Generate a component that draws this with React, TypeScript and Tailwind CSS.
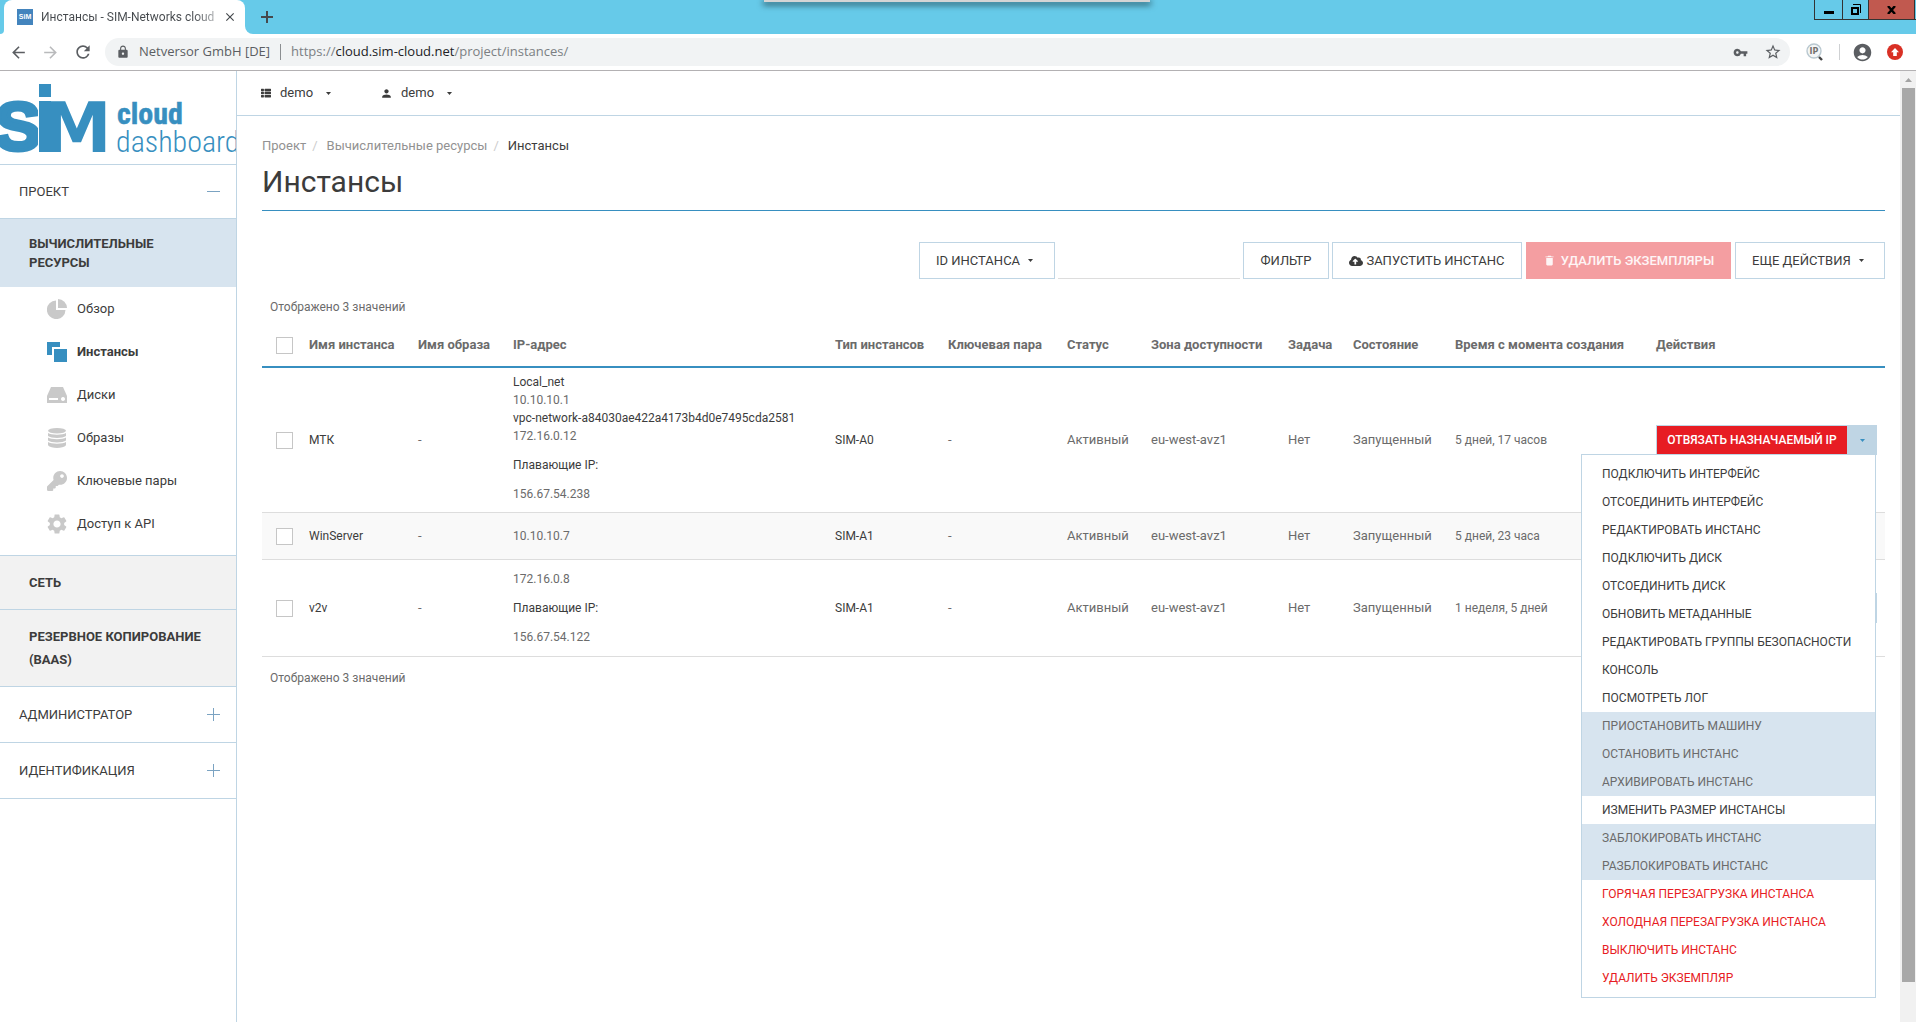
import { useState } from "react";
import type { ReactNode } from "react";
import { FaCloudUploadAlt, FaKey, FaThList } from "react-icons/fa";
import { IoMdTrash } from "react-icons/io";
import {
  MdAccountCircle,
  MdArrowBack,
  MdArrowForward,
  MdClose,
  MdLock,
  MdPerson,
  MdRefresh,
  MdSettings,
  MdStarBorder,
  MdVpnKey,
} from "react-icons/md";

type Instance = {
  name: string;
  ips: { text: string; dark?: boolean }[];
  floating?: string;
  flavor: string;
  age: string;
  action?: string;
};

const instances: Instance[] = [
  {
    name: "МТК",
    ips: [
      { text: "Local_net", dark: true },
      { text: "10.10.10.1" },
      { text: "vpc-network-a84030ae422a4173b4d0e7495cda2581", dark: true },
      { text: "172.16.0.12" },
    ],
    floating: "156.67.54.238",
    flavor: "SIM-A0",
    age: "5 дней, 17 часов",
    action: "ОТВЯЗАТЬ НАЗНАЧАЕМЫЙ IP",
  },
  {
    name: "WinServer",
    ips: [{ text: "10.10.10.7" }],
    flavor: "SIM-A1",
    age: "5 дней, 23 часа",
  },
  {
    name: "v2v",
    ips: [{ text: "172.16.0.8" }],
    floating: "156.67.54.122",
    flavor: "SIM-A1",
    age: "1 неделя, 5 дней",
  },
];

const menuItems: { label: string; kind?: "disabled" | "danger" }[] = [
  { label: "ПОДКЛЮЧИТЬ ИНТЕРФЕЙС" },
  { label: "ОТСОЕДИНИТЬ ИНТЕРФЕЙС" },
  { label: "РЕДАКТИРОВАТЬ ИНСТАНС" },
  { label: "ПОДКЛЮЧИТЬ ДИСК" },
  { label: "ОТСОЕДИНИТЬ ДИСК" },
  { label: "ОБНОВИТЬ МЕТАДАННЫЕ" },
  { label: "РЕДАКТИРОВАТЬ ГРУППЫ БЕЗОПАСНОСТИ" },
  { label: "КОНСОЛЬ" },
  { label: "ПОСМОТРЕТЬ ЛОГ" },
  { label: "ПРИОСТАНОВИТЬ МАШИНУ", kind: "disabled" },
  { label: "ОСТАНОВИТЬ ИНСТАНС", kind: "disabled" },
  { label: "АРХИВИРОВАТЬ ИНСТАНС", kind: "disabled" },
  { label: "ИЗМЕНИТЬ РАЗМЕР ИНСТАНСЫ" },
  { label: "ЗАБЛОКИРОВАТЬ ИНСТАНС", kind: "disabled" },
  { label: "РАЗБЛОКИРОВАТЬ ИНСТАНС", kind: "disabled" },
  { label: "ГОРЯЧАЯ ПЕРЕЗАГРУЗКА ИНСТАНСА", kind: "danger" },
  { label: "ХОЛОДНАЯ ПЕРЕЗАГРУЗКА ИНСТАНСА", kind: "danger" },
  { label: "ВЫКЛЮЧИТЬ ИНСТАНС", kind: "danger" },
  { label: "УДАЛИТЬ ЭКЗЕМПЛЯР", kind: "danger" },
];

const menuStyles = {
  normal: "text-[#3c3c3c]",
  disabled: "bg-[#d7e4ef] text-[#6b6b6b]",
  danger: "text-[#e71c23]",
};

function Caret({ className = "" }: { className?: string }) {
  return (
    <svg width="5" height="3" viewBox="0 0 5 3" className={className} fill="currentColor" aria-hidden="true">
      <path d="M0 0h5L2.5 3z" />
    </svg>
  );
}

/* ---------- browser frame ---------- */

function TabStrip() {
  return (
    <div className="relative flex h-[34px] items-start bg-[#66cae9]">
      <div className="flex h-[34px] w-1 items-end bg-white">
        <span className="h-full w-full rounded-br-lg bg-[#66cae9]" />
      </div>
      <div className="flex h-[34px] w-[241px] items-center rounded-t-lg bg-white pr-2 pl-[13px]">
        <svg width="16" height="16" viewBox="0 0 16 16" aria-hidden="true">
          <rect width="16" height="16" fill="#4384bd" />
          <text x="8" y="10" textAnchor="middle" fontSize="7" fontWeight="700" fill="#fff" fontFamily="Liberation Sans, sans-serif">
            SiM
          </text>
        </svg>
        <span className="ml-2 flex-1 overflow-hidden bg-gradient-to-r from-[#45494d] from-85% to-[#c4c6c8] bg-clip-text font-['Roboto',sans-serif] text-xs whitespace-nowrap text-transparent">
          Инстансы - SIM-Networks cloud
        </span>
        <button className="ml-1 text-[#45494d]" aria-label="Закрыть вкладку">
          <MdClose size={14} />
        </button>
      </div>
      <div className="flex h-[34px] w-2 bg-white">
        <span className="h-full w-full rounded-bl-lg bg-[#66cae9]" />
      </div>
      <button className="mt-[11px] ml-2 text-[#45494d]" aria-label="Новая вкладка">
        <svg width="12" height="12" viewBox="0 0 12 12" stroke="currentColor" strokeWidth="2" aria-hidden="true">
          <path d="M6 0v12M0 6h12" />
        </svg>
      </button>

      {/* edge of the remote session bar */}
      <div className="absolute top-0 left-[764px] h-[2px] w-[386px] bg-[#d5d5d5] shadow-[0_2px_6px_1px_rgba(0,0,0,0.6)]" />

      <div className="ml-auto flex h-5 border-b border-[#333] pr-px text-black">
        <button className="flex w-7 items-center justify-center border-l border-[#333]" aria-label="Свернуть">
          <svg width="10" height="12" viewBox="0 0 10 12" aria-hidden="true">
            <path d="M0 7h10v3H0z" />
          </svg>
        </button>
        <button className="flex w-[26px] items-center justify-center border-l border-[#333]" aria-label="Развернуть">
          <svg width="10" height="11" viewBox="0 0 10 11" fill="none" stroke="#000" aria-hidden="true">
            <path d="M1 4h6v6H1z" strokeWidth="2" />
            <path d="M2 .5h7.5V9" />
          </svg>
        </button>
        <button className="flex w-[47px] items-center justify-center border-x border-[#333] bg-[#c1594f]" aria-label="Закрыть">
          <svg width="9" height="8" viewBox="0 0 9 8" stroke="#000" strokeWidth="2.4" aria-hidden="true">
            <path d="M1 0l7 8M8 0L1 8" />
          </svg>
        </button>
      </div>
    </div>
  );
}

function AddressBar() {
  return (
    <div className="flex h-[37px] items-center border-b border-[#b3b1b3] bg-white pr-[13px] pl-[9px] text-[#5b5e62]">
      <button aria-label="Назад">
        <MdArrowBack size={19} />
      </button>
      <button className="ml-[13px] text-[#b9babc]" aria-label="Вперёд">
        <MdArrowForward size={19} />
      </button>
      <button className="ml-[13px]" aria-label="Обновить">
        <MdRefresh size={20} />
      </button>
      <div className="ml-3 flex h-7 flex-1 items-center rounded-full bg-[#f1f3f4] pr-2 pl-[11px] text-[13px]">
        <MdLock size={14} />
        <span className="ml-[9px] whitespace-nowrap">Netversor GmbH [DE]</span>
        <span className="mx-[10px] h-4 w-px bg-[#8b8e91]" />
        <span className="flex-1 whitespace-nowrap text-[#7b7f83]">
          https://<span className="text-[#202124]">cloud.sim-cloud.net</span>/project/instances/
        </span>
        <MdVpnKey size={15} />
        <MdStarBorder size={18} className="ml-4" />
      </div>
      <svg width="17" height="18" viewBox="0 0 17 18" className="ml-4" aria-hidden="true">
        <circle cx="8" cy="8" r="7" fill="#f4f6f7" stroke="#b9c8d0" strokeWidth="1.4" />
        <path d="M13 14l3 3" stroke="#444" strokeWidth="2.4" />
        <text x="8" y="11" textAnchor="middle" fontSize="8" fontWeight="700" fill="#74736f" fontFamily="DejaVu Sans, sans-serif">
          IP
        </text>
      </svg>
      <span className="mr-3 ml-4 h-4 w-px bg-[#cfd1d3]" />
      <MdAccountCircle size={21} />
      <svg width="16" height="16" viewBox="0 0 16 16" className="ml-[14px]" aria-hidden="true">
        <circle cx="8" cy="8" r="8" fill="#d93025" />
        <path d="M8 4l4 4.3H9.8V12H6.2V8.3H4z" fill="#fff" />
      </svg>
    </div>
  );
}

/* ---------- sidebar ---------- */

function Logo() {
  return (
    <svg width="236" height="93" viewBox="0 0 236 93" className="block" fill="#378fc0" role="img" aria-label="SIM cloud dashboard">
      <text x="-5" y="79" fontSize="69" fontWeight="700" fontFamily="Liberation Sans, sans-serif" stroke="#378fc0" strokeWidth="4">
        S
      </text>
      <rect x="38" y="12" width="14" height="70" fill="#fff" />
      <text x="42" y="81" fontSize="70" fontWeight="700" fontFamily="DejaVu Sans, sans-serif">
        M
      </text>
      <rect x="39" y="13" width="12" height="13" />
      <rect x="39" y="30" width="12" height="51" />
      <text x="117" y="53" fontSize="30" fontWeight="700" fontFamily="Roboto Condensed, Roboto, sans-serif" stroke="#378fc0" strokeWidth="0.5">
        cloud
      </text>
      <text x="116" y="81" fontSize="30" fontWeight="300" fontFamily="Roboto Condensed, Roboto, sans-serif">
        dashboard
      </text>
    </svg>
  );
}

const navItems: { label: string; icon: ReactNode; active?: boolean }[] = [
  {
    label: "Обзор",
    icon: (
      <svg width="20" height="20" viewBox="0 0 20 20" fill="currentColor">
        <path d="M9 1.5V11h9.5A9.3 9.3 0 1 1 9 1.5z" />
        <path d="M11 0a9 9 0 0 1 9 9h-9z" />
      </svg>
    ),
  },
  {
    label: "Инстансы",
    active: true,
    icon: (
      <svg width="20" height="20" viewBox="0 0 20 20" fill="currentColor">
        <path d="M0 0h13v5H5v8H0z" />
        <path d="M7 7h13v13H7z" />
      </svg>
    ),
  },
  {
    label: "Диски",
    icon: (
      <svg width="20" height="16" viewBox="0 0 20 16" fill="currentColor">
        <path d="M4 0h12l4 9H0z" />
        <path fillRule="evenodd" d="M0 9h20v7H0zM2 11v2h9v-2zM16 10a2 2 0 1 0 .01 0z" />
      </svg>
    ),
  },
  {
    label: "Образы",
    icon: (
      <svg width="18" height="20" viewBox="0 0 18 20" fill="currentColor">
        <ellipse cx="9" cy="2.8" rx="9" ry="2.8" />
        <path d="M0 5c3 2.3 15 2.3 18 0v3c-3 2.6-15 2.6-18 0z" />
        <path d="M0 9.5c3 2.3 15 2.3 18 0v3c-3 2.6-15 2.6-18 0z" />
        <path d="M0 14c3 2.3 15 2.3 18 0v3.2c-3 3.7-15 3.7-18 0z" />
      </svg>
    ),
  },
  { label: "Ключевые пары", icon: <FaKey size={20} /> },
  { label: "Доступ к API", icon: <MdSettings size={24} className="-mx-[2px] shrink-0" /> },
];

function PlusMinus({ plus }: { plus?: boolean }) {
  return (
    <svg width="13" height="13" viewBox="0 0 13 13" stroke="#7ba3c2" aria-hidden="true">
      <path d={plus ? "M0 6.5h13M6.5 0v13" : "M0 6.5h13"} />
    </svg>
  );
}

function Sidebar() {
  return (
    <aside className="w-[237px] shrink-0 border-r border-[#bfd5e4] text-[13px] text-[#3c3c3c]">
      <a href="#home" className="block border-b border-[#bfd5e4]">
        <Logo />
      </a>
      <button className="flex h-[54px] w-full items-center justify-between border-b border-[#bfd5e4] pr-4 pl-[19px]">
        ПРОЕКТ
        <PlusMinus />
      </button>
      <button className="flex h-[68px] w-full items-center bg-[#d7e4ef] pr-16 pl-[29px] text-left leading-[19px] font-bold">
        ВЫЧИСЛИТЕЛЬНЫЕ РЕСУРСЫ
      </button>
      <nav className="border-b border-[#bfd5e4] pb-[10px]">
        {navItems.map((item) => (
          <a key={item.label} href="#" className="flex h-[43px] items-center pl-[47px]">
            <span className={`flex w-5 justify-center ${item.active ? "text-[#378fc0]" : "text-[#c9c9c9]"}`}>
              {item.icon}
            </span>
            <span className={`ml-[10px] ${item.active ? "font-bold" : ""}`}>{item.label}</span>
          </a>
        ))}
      </nav>
      <button className="flex h-[54px] w-full items-center border-b border-[#bfd5e4] bg-[#f2f2f2] pl-[29px] font-bold">
        СЕТЬ
      </button>
      <button className="flex h-[77px] w-full items-center border-b border-[#bfd5e4] bg-[#f2f2f2] pr-4 pl-[29px] text-left leading-[23px] font-bold">
        РЕЗЕРВНОЕ КОПИРОВАНИЕ (BAAS)
      </button>
      {["АДМИНИСТРАТОР", "ИДЕНТИФИКАЦИЯ"].map((label) => (
        <button key={label} className="flex h-14 w-full items-center justify-between border-b border-[#bfd5e4] pr-4 pl-[19px]">
          {label}
          <PlusMinus plus />
        </button>
      ))}
    </aside>
  );
}

/* ---------- instances page ---------- */

function Toolbar() {
  const btn = "flex h-[37px] items-center border border-[#bfd5e4] bg-white text-[13px] text-[#3c3c3c] whitespace-nowrap";
  return (
    <form className="mt-[31px] flex justify-end" onSubmit={(e) => e.preventDefault()}>
      <button type="button" className={`${btn} w-[136px] pl-4`}>
        ID ИНСТАНСА <Caret className="ml-2" />
      </button>
      <input aria-label="Фильтр инстансов" className="ml-[3px] h-[37px] w-[182px] border-b border-[#ddd] px-2 text-[13px] outline-none" />
      <button type="submit" className={`${btn} ml-[3px] w-[86px] justify-center`}>
        ФИЛЬТР
      </button>
      <button type="button" className={`${btn} ml-[3px] w-[190px] justify-center`}>
        <FaCloudUploadAlt size={14} className="mr-[3px]" />
        ЗАПУСТИТЬ ИНСТАНС
      </button>
      <button
        type="button"
        disabled
        className="ml-1 flex h-[37px] w-[205px] items-center justify-center bg-[#f49ea1] text-[13px] font-medium whitespace-nowrap text-white/90"
      >
        <IoMdTrash size={13} className="mr-[5px]" />
        УДАЛИТЬ ЭКЗЕМПЛЯРЫ
      </button>
      <button type="button" className={`${btn} ml-1 w-[150px] pl-4`}>
        ЕЩЕ ДЕЙСТВИЯ <Caret className="ml-2" />
      </button>
    </form>
  );
}

function ActionsMenu() {
  return (
    <ul className="absolute top-full right-0 z-10 -mt-px mr-px w-[295px] border border-[#bfd5e4] bg-white py-[5px]">
      {menuItems.map((item) => (
        <li key={item.label}>
          <button
            disabled={item.kind === "disabled"}
            className={`block h-7 w-full pl-5 text-left text-xs whitespace-nowrap ${menuStyles[item.kind ?? "normal"]}`}
          >
            {item.label}
          </button>
        </li>
      ))}
    </ul>
  );
}

function Checkbox({ label }: { label: string }) {
  return (
    <input
      type="checkbox"
      aria-label={label}
      className="block size-[17px] appearance-none border border-[#c6c6c6] bg-white checked:bg-[#378fc0]"
    />
  );
}

const columns = [
  { label: "Имя инстанса", width: "w-[109px]" },
  { label: "Имя образа", width: "w-[95px]" },
  { label: "IP-адрес", width: "w-[322px]" },
  { label: "Тип инстансов", width: "w-[113px]" },
  { label: "Ключевая пара", width: "w-[119px]" },
  { label: "Статус", width: "w-[84px]" },
  { label: "Зона доступности", width: "w-[137px]" },
  { label: "Задача", width: "w-[65px]" },
  { label: "Состояние", width: "w-[102px]" },
  { label: "Время с момента создания", width: "w-[201px]" },
  { label: "Действия", width: "" },
];

function InstancesTable() {
  const [openMenu, setOpenMenu] = useState<string | null>("МТК");

  return (
    <table className="mt-2 w-full table-fixed text-left text-[13px] text-[#6b6b6b]">
      <thead>
        <tr className="h-[43px] border-b-2 border-[#378fc0]">
          <th className="w-[39px] pl-[14px]">
            <Checkbox label="Выбрать все" />
          </th>
          {columns.map((col) => (
            <th key={col.label} className={`${col.width} pl-2 font-bold whitespace-nowrap`}>
              {col.label}
            </th>
          ))}
        </tr>
      </thead>
      <tbody>
        {instances.map((vm) => (
          <tr key={vm.name} className="h-[47px] border-b border-[#ddd] even:bg-[#f9f9f9]">
            <td className="pl-[14px]">
              <Checkbox label={vm.name} />
            </td>
            <td className="pl-2 text-xs">
              <a href="#" className="text-[#3c3c3c]">{vm.name}</a>
            </td>
            <td className="pl-2">-</td>
            <td className={`pl-2 text-xs leading-[18px] whitespace-nowrap ${vm.ips.length > 1 ? "pt-[5px] pb-[9px]" : "py-[10px]"}`}>
              {vm.ips.map((ip) => (
                <p key={ip.text} className={ip.dark ? "text-[#3c3c3c]" : ""}>{ip.text}</p>
              ))}
              {vm.floating && (
                <>
                  <p className="mt-[11px] text-[#3c3c3c]">Плавающие IP:</p>
                  <p className="mt-[11px]">{vm.floating}</p>
                </>
              )}
            </td>
            <td className="pl-2 text-xs text-[#3c3c3c]">{vm.flavor}</td>
            <td className="pl-2">-</td>
            <td className="pl-2">Активный</td>
            <td className="pl-2">eu-west-avz1</td>
            <td className="pl-2">Нет</td>
            <td className="pl-2">Запущенный</td>
            <td className="pl-2 text-xs">{vm.age}</td>
            <td className="pr-2 pl-2">
              <div className="relative flex h-[30px] justify-end">
                {vm.action && (
                  <button className="flex-1 border border-r-0 border-[#bfd5e4] bg-[#e71c23] text-xs font-medium whitespace-nowrap text-white">
                    {vm.action}
                  </button>
                )}
                {vm.floating && (
                  <button
                    aria-label={`Действия: ${vm.name}`}
                    onClick={() => setOpenMenu(openMenu === vm.name ? null : vm.name)}
                    className="flex w-[30px] items-center justify-center bg-[#bfd5e4] text-[#378fc0]"
                  >
                    <Caret />
                  </button>
                )}
                {openMenu === vm.name && <ActionsMenu />}
              </div>
            </td>
          </tr>
        ))}
      </tbody>
    </table>
  );
}

function TopBar() {
  return (
    <header className="flex h-[45px] items-center border-b border-[#bfd5e4] pl-6 text-[13px] text-[#3c3c3c]">
      <button className="flex w-[119px] items-center">
        <FaThList size={10} className="mr-[9px]" />
        demo
        <Caret className="ml-[13px]" />
      </button>
      <button className="flex items-center">
        <MdPerson size={13} className="mr-2" />
        demo
        <Caret className="ml-[13px]" />
      </button>
    </header>
  );
}

export default function App() {
  return (
    <div className="flex min-h-screen flex-col bg-white font-['Roboto',sans-serif]">
      <div className="font-['Open_Sans',sans-serif]">
        <TabStrip />
        <AddressBar />
      </div>

      <div className="flex flex-1">
        <Sidebar />
        <div className="min-w-0 flex-1">
          <TopBar />
          <main className="pr-[15px] pl-[25px]">
            <nav className="mt-5 flex h-5 items-center text-[13px] text-[#929292]" aria-label="Навигация">
              <a href="#">Проект</a>
              <span className="mr-[9px] ml-[6px] text-[#ccc]">/</span>
              <a href="#">Вычислительные ресурсы</a>
              <span className="mr-[9px] ml-[6px] text-[#ccc]">/</span>
              <span className="text-[#3c3c3c]">Инстансы</span>
            </nav>
            <h1 className="mt-2 h-[47px] border-b border-[#378fc0] text-[30px] leading-[36px] text-[#3c3c3c]">Инстансы</h1>
            <Toolbar />
            <p className="mt-[19px] pl-2 text-xs leading-[18px] text-[#6b6b6b]">Отображено 3 значений</p>
            <InstancesTable />
            <p className="mt-3 pl-2 text-xs leading-[18px] text-[#6b6b6b]">Отображено 3 значений</p>
          </main>
        </div>

        {/* scrollbar */}
        <div className="flex w-4 shrink-0 flex-col items-center bg-[#f1f1f1] pb-10">
          <svg width="7" height="17" viewBox="0 0 7 17" fill="#a3a3a3" aria-hidden="true">
            <path d="M0 11h7L3.5 7z" />
          </svg>
          <div className="w-[13px] flex-1 bg-[#a8a8a8]" />
        </div>
      </div>
    </div>
  );
}
